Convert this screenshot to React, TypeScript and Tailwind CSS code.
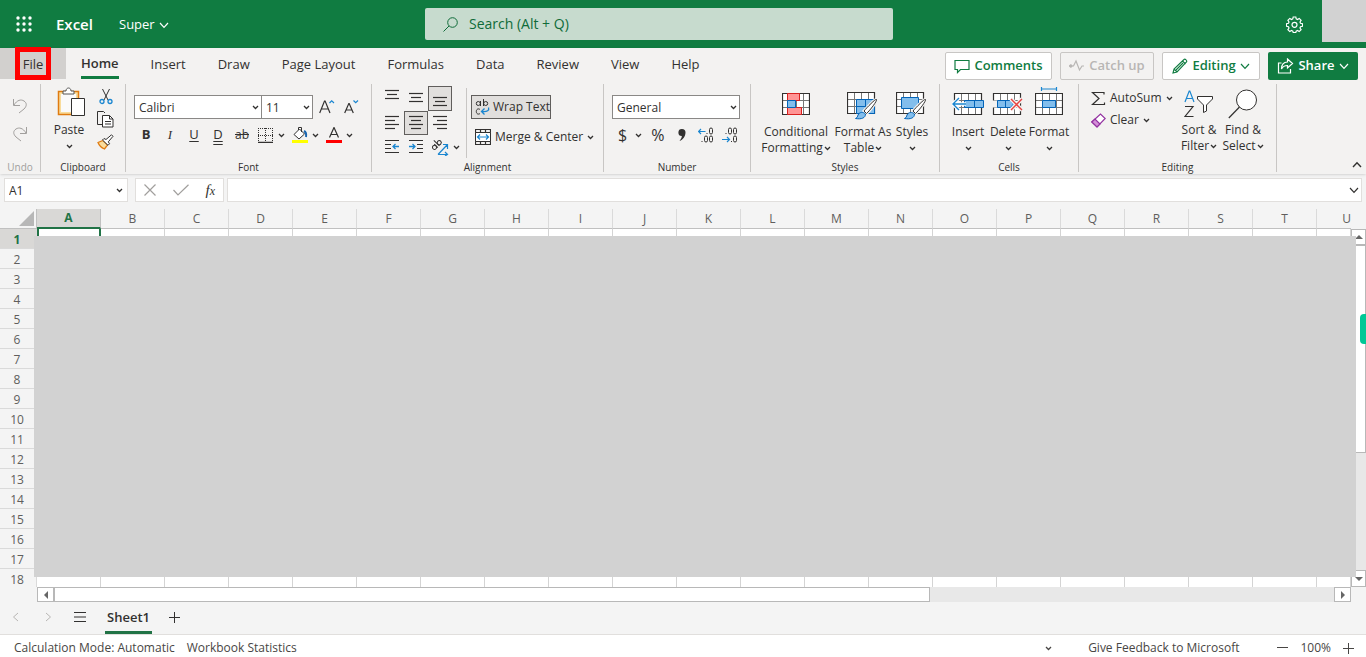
import React from 'react';

const RIBBON_TABS = ['Insert', 'Draw', 'Page Layout', 'Formulas', 'Data', 'Review', 'View', 'Help'];
const COLUMNS = 'ABCDEFGHIJKLMNOPQRSTU'.split('');
const ROWS = Array.from({ length: 18 }, (_, i) => i + 1);

interface SvgProps {
  w: number;
  h: number;
  className?: string;
  children: React.ReactNode;
}

const Svg: React.FC<SvgProps> = ({ w, h, className = '', children }) => (
  <svg width={w} height={h} viewBox={`0 0 ${w} ${h}`} fill="none" stroke="currentColor" aria-hidden="true" className={`shrink-0 ${className}`}>
    {children}
  </svg>
);

const Caret = ({ className = '' }: { className?: string }) => (
  <Svg w={7} h={5} className={className}>
    <path d="M1 1l2.5 2.5L6 1" strokeWidth="1.3" />
  </Svg>
);

const Chevron = ({ className = '' }: { className?: string }) => (
  <Svg w={10} h={7} className={className}>
    <path d="M1 1l4 4.3L9 1" strokeWidth="1.2" />
  </Svg>
);

// Three or four text lines, described by [x1, x2, y]
const Lines = ({ rows }: { rows: number[][] }) => (
  <Svg w={16} h={16}>
    {rows.map(([x1, x2, y]) => (
      <path key={y} d={`M${x1} ${y}.5H${x2}`} strokeWidth="1.2" />
    ))}
  </Svg>
);

const Sheet = () => (
  <>
    <path d="M.5.5h27v21H.5z" fill="#fff" />
    <path d="M7.5 1v20M14.5 1v20M21.5 1v20M1 7.5h26M1 14.5h26" stroke="#767676" />
    <path d="M.5.5h27v21H.5z" strokeWidth="1.2" />
  </>
);

const Brush = () => (
  <>
    <path d="M29.500 7.500c1 1-6.500 11-10 14l-2.500-2.500c3-3.500 11.500-12.500 12.500-11.500z" fill="#fff" stroke="#f3f2f1" strokeWidth="3" />
    <path d="M29.500 7.500c1 1-6.500 11-10 14l-2.500-2.500c3-3.500 11.500-12.500 12.500-11.500z" fill="#fff" />
    <path d="M18.500 22c0 4-4 5.500-10 4.500 2-1 2-2 2.500-3.500 1.500-3 5-3.500 7.500-1z" fill="#83beec" stroke="#0364b8" />
  </>
);

interface GroupProps {
  label: string;
  className: string;
  children: React.ReactNode;
}

const Group: React.FC<GroupProps> = ({ label, className, children }) => (
  <section aria-label={label} className={`flex shrink-0 flex-col border-r border-[#c8c6c4] ${className}`}>
    <div className="flex flex-1">{children}</div>
    <h2 className="text-center text-[10px] leading-[10px]">{label}</h2>
  </section>
);

interface BigButtonProps {
  lines: string[];
  icon: React.ReactNode;
  className: string;
}

const BigButton: React.FC<BigButtonProps> = ({ lines, icon, className }) => (
  <button className={`flex shrink-0 flex-col items-center text-xs leading-4 ${className}`}>
    <span className="flex h-9 items-center">{icon}</span>
    {lines.length === 2 ? (
      <>
        <span className="whitespace-nowrap">{lines[0]}</span>
        <span className="flex items-center gap-px">
          {lines[1]}
          <Caret />
        </span>
      </>
    ) : (
      <>
        <span>{lines[0]}</span>
        <Caret className="mt-1.5" />
      </>
    )}
  </button>
);

const TitleBar = () => (
  <header className="flex h-12 shrink-0 items-center bg-[#107c41] text-white">
    <div className="flex w-[425px] shrink-0 items-center">
      <button aria-label="App launcher" className="ml-4">
        <svg width="16" height="16" viewBox="0 0 16 16" fill="currentColor">
          {[2, 8, 14].map((y) => [2, 8, 14].map((x) => <circle key={`${x}-${y}`} cx={x} cy={y} r="1.7" />))}
        </svg>
      </button>
      <h1 className="ml-6 w-[63px] text-[15px] font-semibold">Excel</h1>
      <button className="flex items-center gap-1 pt-0.5 text-[13px]">
        Super
        <Chevron />
      </button>
    </div>
    <label className="flex h-8 w-[468px] items-center gap-[11px] rounded-xs bg-[#c7dbce] pl-[18px] text-[#0f6b39]">
      <Svg w={15} h={15}>
        <circle cx="9.500" cy="5.500" r="4.800" />
        <path d="M6 9L.500 14.500" />
      </Svg>
      <input aria-label="Search" placeholder="Search (Alt + Q)" className="w-full bg-transparent text-sm outline-none placeholder:text-[#0f6b39]" />
    </label>
    <button aria-label="Settings" className="mr-[19px] ml-auto">
      <Svg w={17} h={17}>
        <path d="M7.200 1h2.600l.4 1.900 1.300.6 1.700-1.100 1.900 1.900-1.100 1.700.5 1.300 2 .4v2.600l-2 .4-.5 1.300 1.100 1.700-1.900 1.900-1.700-1.100-1.300.6-.4 1.400H7.200l-.4-1.400-1.300-.6-1.700 1.100-1.900-1.900L3 12l-.5-1.300-2-.4V7.700l2-.4L3 6 1.900 4.300l1.900-1.900 1.700 1.100 1.300-.6z" strokeWidth="1.200" />
        <circle cx="8.500" cy="8.800" r="2.500" strokeWidth="1.200" />
      </Svg>
    </button>
    <div className="h-[42px] w-11 self-start bg-[#d2d2d2]" />
  </header>
);

const TabRow = () => (
  <nav className="flex h-9 shrink-0 text-[13px]">
    <button className="relative h-[31px] w-[66px] bg-[#d2d0ce] pt-0.5 font-medium">
      File
      <span className="absolute -top-px left-[15px] h-[33px] w-9 border-[5px] border-[#ff0000]" />
    </button>
    <button className="ml-[15px] h-[31px] border-b-[3px] border-[#107c41] pt-1 font-semibold">Home</button>
    <div className="ml-8 flex h-[31px] gap-8 pt-0.5">
      {RIBBON_TABS.map((tab) => (
        <button key={tab} className="whitespace-nowrap">{tab}</button>
      ))}
    </div>
    <div className="mt-1 mr-2 ml-auto flex h-7 gap-2 font-semibold whitespace-nowrap text-[#107c41]">
      <button className="flex w-[107px] items-center justify-center gap-1 rounded-xs border border-[#c8c6c4] bg-white">
        <Svg w={16} h={15}>
          <path d="M1 1.500h14v9H6.500l-3 3v-3H1z" strokeWidth="1.200" />
        </Svg>
        Comments
      </button>
      <button disabled className="flex w-[94px] items-center justify-center gap-1 rounded-xs border border-[#c8c6c4] text-[#b8b6b4]">
        <Svg w={16} h={14}>
          <path d="M2 7h2.500L7 2l3.500 9L13 7h2" strokeWidth="1.200" />
          <circle cx="1.800" cy="7" r="1.300" fill="currentColor" />
        </Svg>
        Catch up
      </button>
      <button className="flex w-[98px] items-center justify-center gap-1 rounded-xs border border-[#c8c6c4] bg-white">
        <Svg w={16} h={16}>
          <path d="M1 15l1-4L12 1.500c1-1 3.500 1 2.500 2.500L5 14zM2 11l3 3M10.500 3l3 3M4 12l7-7" strokeWidth="1.100" />
        </Svg>
        Editing
        <Chevron />
      </button>
      <button className="flex w-[90px] items-center justify-center gap-1 rounded-xs bg-[#107c41] text-white">
        <Svg w={17} h={16}>
          <path d="M4.500 5H1.500v10h12v-4M10.500 1l5 4.500-5 4.500V7.500C8 7.500 6 8 4.500 11c0-4 2-7 6-7z" strokeWidth="1.200" />
        </Svg>
        Share
        <Chevron />
      </button>
    </div>
  </nav>
);

const UndoGroup = () => (
  <Group label="Undo" className="w-[41px] text-[#a19f9d]">
    <div className="flex flex-1 flex-col items-center gap-3 pt-3.5">
      <button aria-label="Undo">
        <Svg w={16} h={16}>
          <path d="M1.500 1v6.500H8M2 7c3-5 7-6 10-4s3 5 0 8l-5 4" />
        </Svg>
      </button>
      <button aria-label="Redo">
        <Svg w={16} h={16}>
          <path d="M14.500 1v6.500H8M14 7C11 2 7 1 4 3s-3 5 0 8l5 4" />
        </Svg>
      </button>
    </div>
  </Group>
);

const ClipboardGroup = () => (
  <Group label="Clipboard" className="w-[85px]">
    <button className="ml-3 flex w-8 flex-col items-center pt-0.5 text-xs leading-4">
      <Svg w={30} h={32} className="ml-1">
        <path d="M2.500 5.500h20v23h-20z" fill="#f9dc9c" stroke="#e07b10" strokeWidth="1.500" />
        <path d="M5 8h15v18H5z" fill="#fafafa" stroke="none" />
        <path d="M7 8V5h3c0-4 5-4 5 0h3v3z" fill="#fff" stroke="#555" />
        <path d="M15.500 12.500h13v17h-13z" fill="#fff" />
      </Svg>
      <span className="mt-1">Paste</span>
      <Caret className="mt-1.5" />
    </button>
    <div className="ml-3 flex flex-col items-center gap-1.5 pt-1">
      <button aria-label="Cut">
        <Svg w={16} h={17}>
          <path d="M4.500 1l5.500 11M11.500 1L6 12" />
          <circle cx="4" cy="13.500" r="2" stroke="#1a86d0" strokeWidth="1.300" />
          <circle cx="12" cy="13.500" r="2" stroke="#1a86d0" strokeWidth="1.300" />
        </Svg>
      </button>
      <button aria-label="Copy">
        <Svg w={17} h={17}>
          <path d="M6.500 13.500h-6V.500h6l1.500 1.500" />
          <path d="M5.500 4.500h7l3.500 3.500v8H5.500z" fill="#fff" />
          <path d="M12.500 4.500V8H16M8 10.500h6M8 13h6" />
        </Svg>
      </button>
      <button aria-label="Format painter">
        <Svg w={17} h={16}>
          <path d="M1 8.500l5-2 4.500 4.500-3 4C5 14 2 11 1 8.500z" fill="#f9dc9c" stroke="#e07b10" strokeWidth="1.300" />
          <path d="M5.500 6L7 4.500l2 1L14.500.800l1.500 1.500-4.700 5.500 1.200 2L11 11.300z" fill="#fff" />
        </Svg>
      </button>
    </div>
  </Group>
);

const FontGroup = () => (
  <Group label="Font" className="w-[246px]">
    <div className="ml-2 flex flex-1 flex-col gap-1.5 pt-[11px]">
      <div className="flex h-6 items-center">
        <label className="flex h-6 w-32 items-center border border-[#8a8886] bg-white pr-0.5">
          <select aria-label="Font name" className="w-full appearance-none pt-px pl-1 text-xs outline-none">
            <option>Calibri</option>
          </select>
          <Caret />
        </label>
        <label className="flex h-6 w-[51px] items-center border border-l-0 border-[#8a8886] bg-white pr-0.5">
          <select aria-label="Font size" className="w-full appearance-none pt-px pl-1 text-xs outline-none">
            <option>11</option>
          </select>
          <Caret />
        </label>
        <button aria-label="Increase font size" className="ml-1.5">
          <Svg w={16} h={16}>
            <path d="M.700 14L5.500 2h.6L11 14M2.500 10h6.700" strokeWidth="1.200" />
            <path d="M10.500 4l2.200-2.200L15 4" stroke="#1a86d0" strokeWidth="1.200" />
          </Svg>
        </button>
        <button aria-label="Decrease font size" className="ml-2">
          <Svg w={16} h={16}>
            <path d="M1.700 14L5.800 4.500h.4L10.300 14M3 11h6" strokeWidth="1.200" />
            <path d="M10.500 1.500l2.200 2.200L15 1.500" stroke="#1a86d0" strokeWidth="1.200" />
          </Svg>
        </button>
      </div>
      <div className="flex h-5 items-center text-[13px]">
        <button className="w-6 font-bold">B</button>
        <button className="w-6 font-[Liberation_Serif,serif] italic">I</button>
        <button className="w-6 underline underline-offset-2">U</button>
        <button className="w-6 underline decoration-double underline-offset-2">D</button>
        <button className="w-6 text-xs line-through">ab</button>
        <button aria-label="Borders" className="ml-1 flex items-center gap-[5px]">
          <Svg w={15} h={15}>
            <path d="M.500 0v14M7.500 0v14M14.500 0v14M0 .500h15M0 7.500h15" strokeDasharray="1 1" />
            <path d="M0 14.500h15" strokeWidth="1.500" />
          </Svg>
          <Caret />
        </button>
        <button aria-label="Fill color" className="ml-[7px] flex items-center gap-1">
          <Svg w={16} h={16}>
            <path d="M2 7.500L7.500 2l5 5L7 12zM6.500 3V.500h3V5" fill="#fff" />
            <path d="M12 4c2 1 2.500 3 2 6" stroke="#1a66b0" strokeWidth="2" />
            <path d="M0 14.500h16" stroke="#ffff00" strokeWidth="3" />
          </Svg>
          <Caret />
        </button>
        <button aria-label="Font color" className="ml-[7px] flex items-center gap-1">
          <Svg w={16} h={16}>
            <path d="M3.500 10.500L8 .500l4.500 10M5 7.500h6" strokeWidth="1.200" />
            <path d="M0 14.500h16" stroke="#ff0000" strokeWidth="3" />
          </Svg>
          <Caret />
        </button>
      </div>
    </div>
  </Group>
);

const AlignmentGroup = () => (
  <Group label="Alignment" className="w-[232px]">
    <div className="mt-0.5 ml-2 grid h-[75px] grid-cols-[24px_24px_24px] grid-rows-[25px_24px_24px]">
      <button aria-label="Top align" className="flex justify-center pt-0.5"><Lines rows={[[1, 15, 2], [3, 13, 6], [1, 15, 10]]} /></button>
      <button aria-label="Middle align" className="flex items-center justify-center"><Lines rows={[[1, 15, 2], [3, 13, 6], [1, 15, 10]]} /></button>
      <button aria-label="Bottom align" className="flex items-end justify-center border border-[#605e5c] bg-[#e1dfdd] pb-0.5"><Lines rows={[[1, 15, 5], [3, 13, 9], [1, 15, 13]]} /></button>
      <button aria-label="Align left" className="flex items-center justify-center"><Lines rows={[[1, 15, 1], [1, 11, 5], [1, 15, 9], [1, 11, 13]]} /></button>
      <button aria-label="Center" className="flex items-center justify-center border border-[#605e5c] bg-[#e1dfdd]"><Lines rows={[[1, 15, 1], [3, 13, 5], [1, 15, 9], [3, 13, 13]]} /></button>
      <button aria-label="Align right" className="flex items-center justify-center"><Lines rows={[[1, 15, 1], [5, 15, 5], [1, 15, 9], [5, 15, 13]]} /></button>
      <button aria-label="Decrease indent" className="flex items-center justify-center">
        <Svg w={16} h={16}>
          <path d="M1 1.500h14M1 5.500h6M1 9.500h6M1 13.500h14" strokeWidth="1.200" />
          <path d="M15 7.500H9M11.500 5L9 7.500l2.500 2.500" stroke="#1a86d0" strokeWidth="1.300" />
        </Svg>
      </button>
      <button aria-label="Increase indent" className="flex items-center justify-center">
        <Svg w={16} h={16}>
          <path d="M1 1.500h14M9 5.500h6M9 9.500h6M1 13.500h14" strokeWidth="1.200" />
          <path d="M1 7.500h6M4.500 5L7 7.500 4.500 10" stroke="#1a86d0" strokeWidth="1.300" />
        </Svg>
      </button>
      <button aria-label="Orientation" className="flex items-center gap-1 pl-1">
        <Svg w={17} h={17}>
          <g transform="rotate(-45 5 8)">
            <circle cx="3" cy="6.500" r="2" />
            <path d="M5.200 4v5M7.500 1v8" />
            <circle cx="9.700" cy="6.500" r="2" />
          </g>
          <path d="M6 15.500L15 6M11 5.500h4.500V10M6 15.500h9M13 13l2.500 2.500L13 17" stroke="#1a86d0" strokeWidth="1.200" />
        </Svg>
        <Caret />
      </button>
    </div>
    <div className="my-1 ml-3.5 w-px bg-[#c8c6c4]" />
    <div className="ml-1 flex flex-col items-start gap-2 pt-[11px] text-xs whitespace-nowrap">
      <button className="flex h-6 w-20 items-center gap-0.5 border border-[#605e5c] bg-[#e1dfdd] pl-0.5">
        <Svg w={17} h={18}>
          <circle cx="4.300" cy="5.500" r="2" />
          <path d="M6.500 3v5M9.500 1v7" />
          <circle cx="11.700" cy="5.500" r="2" />
          <path d="M6 11.500c-2-1.500-3.700 0-3.700 2s1.700 3.500 3.700 2" />
          <path d="M14.500 9.500c1 3-1 4.500-6.500 4M10.500 10.500l-3 3 3 3" stroke="#1a86d0" strokeWidth="1.300" />
        </Svg>
        Wrap Text
      </button>
      <button className="flex h-5 items-center gap-1 pl-1">
        <Svg w={16} h={16}>
          <path d="M.500.500h15v15H.500zM5.500.500v3M10.500.500v3M5.500 12.500v3M10.500 12.500v3" strokeWidth="1.200" />
          <path d="M.500 3.500h15v9H.500z" fill="#fff" />
          <path d="M2.500 8h11M5 5.500L2.500 8 5 10.500M11 5.500L13.500 8 11 10.500" stroke="#1a86d0" strokeWidth="1.200" />
        </Svg>
        Merge &amp; Center
        <Caret />
      </button>
    </div>
  </Group>
);

const NumberGroup = () => (
  <Group label="Number" className="w-[147px]">
    <div className="ml-2 flex flex-col gap-1.5 pt-[11px]">
      <label className="flex h-6 w-32 items-center border border-[#8a8886] bg-white pr-0.5">
        <select aria-label="Number format" className="w-full appearance-none pt-px pl-1 text-xs outline-none">
          <option>General</option>
        </select>
        <Caret />
      </label>
      <div className="flex h-5 items-center text-base">
        <button aria-label="Currency" className="ml-1.5 flex items-center gap-2">
          $
          <Caret />
        </button>
        <button aria-label="Percent" className="ml-[9px]">%</button>
        <button aria-label="Comma style" className="ml-3.5">
          <svg width="8" height="14" viewBox="0 0 8 14" fill="currentColor">
            <path d="M4 1a3.500 3.500 0 0 1 3.500 3.500C7.500 8 5 12 1.500 13c1.500-2 2.500-4 2.300-5A3.500 3.500 0 1 1 4 1z" />
          </svg>
        </button>
        <button aria-label="Increase decimal" className="ml-3">
          <Svg w={16} h={16}>
            <path d="M7.500 4.500H.500M3 2L.500 4.500 3 7" stroke="#1a86d0" strokeWidth="1.200" />
            <rect x="11.500" y="1" width="3" height="6" rx="1.500" />
            <rect x="6.500" y="9" width="3" height="6" rx="1.500" />
            <rect x="11.500" y="9" width="3" height="6" rx="1.500" />
            <path d="M8.500 6.500h1M3.500 14.500h1" />
          </Svg>
        </button>
        <button aria-label="Decrease decimal" className="ml-2">
          <Svg w={16} h={16}>
            <path d="M0 12.500h7.500M5 10l2.500 2.500L5 15" stroke="#1a86d0" strokeWidth="1.200" />
            <rect x="6.500" y="1" width="3" height="6" rx="1.500" />
            <rect x="11.500" y="1" width="3" height="6" rx="1.500" />
            <rect x="11.500" y="9" width="3" height="6" rx="1.500" />
            <path d="M3.500 6.500h1M9 14.500h1" />
          </Svg>
        </button>
      </div>
    </div>
  </Group>
);

const StylesGroup = () => (
  <Group label="Styles" className="w-[189px]">
    <BigButton
      className="ml-2 w-[74px] pt-1"
      lines={['Conditional', 'Formatting']}
      icon={
        <Svg w={28} h={22} className="-mt-1">
          <Sheet />
          <path d="M5.500.500h12v7h-12zM5.500 14.500h14v7h-14z" fill="#ff9494" stroke="#d9201f" />
          <path d="M5.500 7.500h8v7h-8z" fill="#83beec" stroke="#0364b8" />
        </Svg>
      }
    />
    <BigButton
      className="w-[60px] pt-1"
      lines={['Format As', 'Table']}
      icon={
        <Svg w={32} h={28}>
          <Sheet />
          <path d="M9.500 7.500h18v14h-18z" fill="#83beec" stroke="#0364b8" />
          <path d="M9.500 14.500h18M18.500 7.500v14" stroke="#0364b8" />
          <Brush />
        </Svg>
      }
    />
    <BigButton
      className="w-[38px] pt-1"
      lines={['Styles']}
      icon={
        <Svg w={32} h={28}>
          <Sheet />
          <path d="M5.500 5.500h17v11h-17z" fill="#83beec" stroke="#0364b8" />
          <Brush />
        </Svg>
      }
    />
  </Group>
);

const CellsGroup = () => (
  <Group label="Cells" className="w-[139px]">
    <BigButton
      className="ml-2 w-10 pt-1"
      lines={['Insert']}
      icon={
        <Svg w={32} h={26} className="-mt-1">
          <g transform="translate(2 2)"><Sheet /></g>
          <path d="M12.500 9.500h19v7h-19zM22.500 9.500v7" fill="#83beec" stroke="#0364b8" />
          <path d="M14 13H1.500M7 7l-6 6 6 6" stroke="#fff" strokeWidth="3.500" />
          <path d="M14 13H1.500M7 7l-6 6 6 6" stroke="#1a86d0" strokeWidth="1.400" />
        </Svg>
      }
    />
    <BigButton
      className="w-10 pt-1"
      lines={['Delete']}
      icon={
        <Svg w={32} h={26} className="-mt-1">
          <g transform="translate(1 2)"><Sheet /></g>
          <path d="M0 9.500h6v7H0z" fill="#f3f2f1" stroke="none" />
          <path d="M5.500 9.500h13l3 3.500-3 3.500h-13zM13.500 9.500v7" fill="#83beec" stroke="#0364b8" />
          <path d="M19 8l11 11M30 8L19 19" stroke="#f3f2f1" strokeWidth="4" />
          <path d="M19 8l11 11M30 8L19 19" stroke="#e8413f" strokeWidth="1.400" />
        </Svg>
      }
    />
    <BigButton
      className="w-[42px] pt-1"
      lines={['Format']}
      icon={
        <Svg w={28} h={30} className="-mt-2">
          <path d="M6.500 0v4M21.500 0v4M6.500 2h15" stroke="#1a86d0" strokeWidth="1.200" />
          <g transform="translate(0 6)"><Sheet /></g>
          <path d="M7.500 13.500h13v7h-13z" fill="#83beec" stroke="#0364b8" />
        </Svg>
      }
    />
  </Group>
);

const EditingGroup = () => (
  <Group label="Editing" className="w-[198px]">
    <div className="ml-3 flex w-[86px] flex-col items-start gap-0.5 pt-1 text-xs whitespace-nowrap">
      <button className="flex h-5 items-center gap-1">
        <Svg w={15} h={15}>
          <path d="M13 3.500V1.500H1.500L8 7.500l-6.500 6H13.500v-2" strokeWidth="1.200" />
        </Svg>
        AutoSum
        <Caret />
      </button>
      <button className="flex h-5 items-center gap-1">
        <Svg w={15} h={15}>
          <path d="M.800 9L9.500 1l4.700 4.500L6 14z" fill="#fff" stroke="#9332a1" strokeWidth="1.200" />
          <path d="M.800 9L4 6l5 5-3 3z" fill="#d48fd8" stroke="#9332a1" strokeWidth="1.200" />
        </Svg>
        Clear
        <Caret />
      </button>
    </div>
    <BigButton
      className="w-11 pt-0.5"
      lines={['Sort &', 'Filter']}
      icon={
        <Svg w={30} h={28}>
          <path d="M1 12L5.200 1h.6L10 12M2.500 8.500h6" stroke="#1a86d0" strokeWidth="1.200" />
          <path d="M1 16.500h8L1 26.500h8.500" strokeWidth="1.200" />
          <path d="M13.500 6.500h15v2.500l-6 6v6l-3 1.500V15l-6-6z" fill="#fff" />
        </Svg>
      }
    />
    <BigButton
      className="w-11 pt-0.5"
      lines={['Find &', 'Select']}
      icon={
        <Svg w={30} h={30}>
          <circle cx="18.500" cy="11" r="10" fill="#fff" />
          <path d="M11.500 18L.800 29" strokeWidth="1.200" />
        </Svg>
      }
    />
  </Group>
);

const FormulaBar = () => (
  <div className="z-10 flex h-[35px] shrink-0 items-start gap-[7px] pt-1 pr-1 pl-1">
    <label className="flex h-6 w-[124px] items-center border border-[#e1dfdd] bg-white pr-1">
      <input aria-label="Name box" defaultValue="A1" className="w-full min-w-0 pt-0.5 pl-1 text-xs outline-none" />
      <Caret />
    </label>
    <div className="flex h-6 w-[89px] items-center justify-between border border-[#e1dfdd] bg-white px-2 text-[#a19f9d]">
      <button aria-label="Cancel">
        <Svg w={12} h={12}><path d="M.500.500l11 11M11.500.500l-11 11" strokeWidth="1.200" /></Svg>
      </button>
      <button aria-label="Enter">
        <Svg w={16} h={12}><path d="M.500 6l4.500 5L15.500.800" strokeWidth="1.200" /></Svg>
      </button>
      <button aria-label="Insert function" className="font-[Liberation_Serif,serif] text-[15px] leading-4 text-[#323130] italic">
        f<span className="text-xs">x</span>
      </button>
    </div>
    <label className="-ml-1 flex h-6 flex-1 items-center border border-[#e1dfdd] bg-white">
      <input aria-label="Formula bar" className="w-full outline-none" />
      <Chevron className="mr-0.5" />
    </label>
  </div>
);

const Arrow = ({ d }: { d: string }) => (
  <svg width="8" height="8" viewBox="0 0 8 8" fill="#666" aria-hidden="true"><path d={d} /></svg>
);

const getColumnClass = (col: string) => {
  if (col === 'A') {
    return 'w-16 border-r border-b-2 border-r-[#c0c0c0] border-b-[#217346] bg-[#d9d8d6] font-bold text-[#217346]';
  }
  const base = 'border-b border-b-[#c0c0c0] bg-[#f4f4f4] font-normal';
  // The last column takes what is left of the row
  return col === 'U' ? `${base} text-right` : `${base} w-16 border-r border-r-[#dadada]`;
};

const Grid = () => (
  <main className="relative flex min-h-0 flex-1">
    <div className="min-w-0 flex-1 overflow-hidden">
      <table className="w-full table-fixed border-separate border-spacing-0 bg-white text-xs text-[#605e5c]">
        <thead>
          <tr className="h-5">
            <th className="w-[37px] border-r border-b border-[#c0c0c0] bg-[#f4f4f4]">
              <Svg w={15} h={15} className="ml-[19px]"><path d="M15 0v15H0z" fill="#b7b7b7" stroke="none" /></Svg>
            </th>
            {COLUMNS.map((col) => (
              <th key={col} className={`h-5 p-0 ${getColumnClass(col)}`}>{col}</th>
            ))}
          </tr>
        </thead>
        <tbody>
          {ROWS.map((row) => (
            <tr key={row}>
              <th className={`h-5 border-r border-b border-[#dadada] p-0 pt-0.5 pr-0.5 leading-4 ${row === 1 ? 'bg-[#d9d8d6] font-bold text-[#217346]' : 'bg-[#f4f4f4] font-normal'}`}>{row}</th>
              {COLUMNS.map((col) => (
                <td key={col} className={row === 1 && col === 'A' ? 'border-x-2 border-[#217346]' : 'border-r border-b border-[#d4d4d4]'} />
              ))}
            </tr>
          ))}
        </tbody>
      </table>
    </div>
    <div className="mt-5 flex w-[15px] flex-col bg-[#e8e8e8]">
      <button aria-label="Scroll up" className="flex h-4 items-center justify-center border border-[#b8b8b8] bg-white"><Arrow d="M0 6l4-4 4 4z" /></button>
      <div className="h-52 border border-[#b8b8b8] bg-white" />
      <button aria-label="Scroll down" className="mt-auto flex h-[17px] items-center justify-center border border-[#b8b8b8] bg-white"><Arrow d="M0 2l4 4 4-4z" /></button>
    </div>
    <div className="absolute top-[27px] right-2.5 bottom-2.5 left-[34px] bg-[#d2d2d2]" />
    <div className="absolute top-[105px] right-0 h-[30px] w-1.5 rounded-l bg-[#00c896]" />
  </main>
);

const SheetBar = () => (
  <footer className="shrink-0">
    <div className="mr-[15px] ml-[37px] flex h-[15px] bg-[#e8e8e8]">
      <button aria-label="Scroll left" className="flex w-[17px] items-center justify-center border border-[#b8b8b8] bg-white"><Arrow d="M6 0L2 4l4 4z" /></button>
      <div className="w-2/3 border border-[#b8b8b8] bg-white" />
      <button aria-label="Scroll right" className="ml-auto flex w-[17px] items-center justify-center border border-[#b8b8b8] bg-white"><Arrow d="M2 0l4 4-4 4z" /></button>
    </div>
    <div className="flex h-8 items-start text-[#323130]">
      <button aria-label="Previous sheet" className="mt-2.5 ml-3 text-[#b8b6b4]"><Svg w={7} h={10}><path d="M6 1L1.500 5 6 9" /></Svg></button>
      <button aria-label="Next sheet" className="mt-2.5 ml-[26px] text-[#b8b6b4]"><Svg w={7} h={10}><path d="M1 1l4.500 4L1 9" /></Svg></button>
      <button aria-label="All sheets" className="mt-2.5 ml-[22px]"><Svg w={12} h={10}><path d="M0 .500h12M0 5h12M0 9.500h12" /></Svg></button>
      <button className="ml-[19px] h-8 border-b-[3px] border-[#217346] px-0.5 pt-0.5 text-[13px] font-semibold">Sheet1</button>
      <button aria-label="New sheet" className="mt-2.5 ml-[17px]"><Svg w={11} h={11}><path d="M5.500 0v11M0 5.500h11" /></Svg></button>
    </div>
    <div className="flex h-[23px] items-center border-t border-[#e1dfdd] bg-white pt-1 text-xs whitespace-nowrap text-[#484644]">
      <span className="ml-3.5">Calculation Mode: Automatic</span>
      <button className="ml-3">Workbook Statistics</button>
      <button aria-label="Status options" className="mr-9 ml-auto"><Caret /></button>
      <button>Give Feedback to Microsoft</button>
      <button aria-label="Zoom out" className="ml-[38px]"><Svg w={11} h={11}><path d="M0 4.500h11" /></Svg></button>
      <span className="mx-3">100%</span>
      <button aria-label="Zoom in" className="mr-3"><Svg w={11} h={11}><path d="M5.500 0v11M0 5.500h11" /></Svg></button>
    </div>
  </footer>
);

const App: React.FC = () => (
  <div className="flex h-screen flex-col overflow-hidden bg-[#f4f4f4] font-['Open_Sans',sans-serif] text-[#323130]">
    <TitleBar />
    <div className="shrink-0 bg-[#f3f2f1] shadow">
      <TabRow />
      <div className="flex h-[90px] items-stretch pb-0.5">
        <UndoGroup />
        <ClipboardGroup />
        <FontGroup />
        <AlignmentGroup />
        <NumberGroup />
        <StylesGroup />
        <CellsGroup />
        <EditingGroup />
        <button aria-label="Collapse ribbon" className="mt-auto mr-1 mb-1 ml-auto">
          <Svg w={10} h={7}><path d="M1 6l4-4.300L9 6" strokeWidth="1.400" /></Svg>
        </button>
      </div>
    </div>
    <FormulaBar />
    <Grid />
    <SheetBar />
  </div>
);

export default App;
